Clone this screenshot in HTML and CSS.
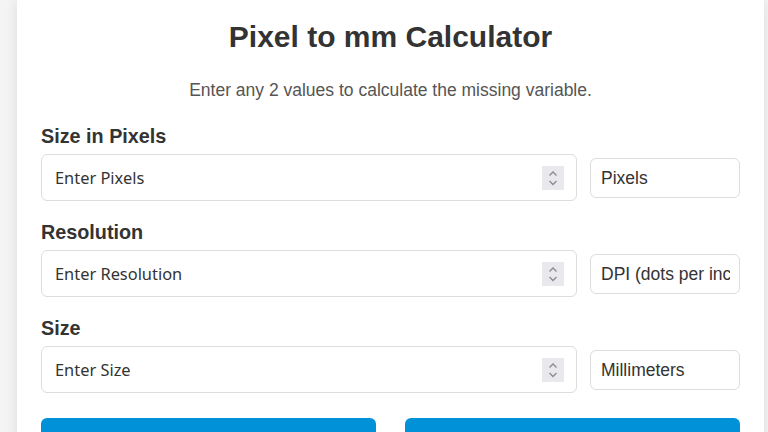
FILE: index.html
```html
<!DOCTYPE html>
<html lang="en">
<head>
<meta charset="utf-8">
<title>Pixel to mm Calculator</title>
<link rel="stylesheet" href="styles.css">
</head>
<body>
<main class="card">
  <h1 class="title">Pixel to mm Calculator</h1>
  <p class="subtitle">Enter any 2 values to calculate the missing variable.</p>

  <div class="group">
    <label class="label" for="px">Size in Pixels</label>
    <div class="row">
      <div class="num">
        <input id="px" class="num-input" type="text" placeholder="Enter Pixels">
        <span class="spin"><svg width="22" height="24" viewBox="0 0 22 24"><path d="M7.5 9.5 L11 6 L14.5 9.5" fill="none" stroke="#8a8a8e" stroke-width="1.3"/><path d="M7.5 15 L11 18.5 L14.5 15" fill="none" stroke="#8a8a8e" stroke-width="1.3"/></svg></span>
      </div>
      <div class="unit"><span class="unit-text">Pixels</span></div>
    </div>
  </div>

  <div class="group">
    <label class="label" for="res">Resolution</label>
    <div class="row">
      <div class="num">
        <input id="res" class="num-input" type="text" placeholder="Enter Resolution">
        <span class="spin"><svg width="22" height="24" viewBox="0 0 22 24"><path d="M7.5 9.5 L11 6 L14.5 9.5" fill="none" stroke="#8a8a8e" stroke-width="1.3"/><path d="M7.5 15 L11 18.5 L14.5 15" fill="none" stroke="#8a8a8e" stroke-width="1.3"/></svg></span>
      </div>
      <div class="unit"><span class="unit-text">DPI (dots per inch)</span></div>
    </div>
  </div>

  <div class="group">
    <label class="label" for="size">Size</label>
    <div class="row">
      <div class="num">
        <input id="size" class="num-input" type="text" placeholder="Enter Size">
        <span class="spin"><svg width="22" height="24" viewBox="0 0 22 24"><path d="M7.5 9.5 L11 6 L14.5 9.5" fill="none" stroke="#8a8a8e" stroke-width="1.3"/><path d="M7.5 15 L11 18.5 L14.5 15" fill="none" stroke="#8a8a8e" stroke-width="1.3"/></svg></span>
      </div>
      <div class="unit"><span class="unit-text">Millimeters</span></div>
    </div>
  </div>

  <div class="actions">
    <button class="btn" type="button">Calculate</button>
    <button class="btn" type="button">Clear</button>
  </div>
</main>
</body>
</html>
```

FILE: styles.css
```css
html, body {
  margin: 0;
  padding: 0;
}
body {
  background: #f4f4f4;
  font-family: "Liberation Sans", Arial, sans-serif;
  color: #333;
  overflow: hidden;
}
.card {
  box-sizing: border-box;
  width: 747px;
  margin-left: 17px;
  background: #fff;
  padding: 21px 24px 24px;
  box-shadow: 0 0 12px rgba(0, 0, 0, 0.1);
  min-height: 500px;
}
.title {
  margin: 0;
  text-align: center;
  font-size: 30px;
  line-height: 32px;
  font-weight: bold;
  color: #333;
}
.subtitle {
  margin: 28px 0 0;
  text-align: center;
  font-size: 17.5px;
  line-height: 18px;
  color: #555;
}
.group {
  margin-top: 27px;
}
.group + .group {
  margin-top: 21px;
}
.label {
  display: block;
  font-size: 19.8px;
  line-height: 21px;
  font-weight: bold;
  color: #333;
  margin-bottom: 7px;
}
.row {
  display: flex;
  align-items: center;
  gap: 13px;
}
.num {
  flex: 1;
  display: flex;
  align-items: center;
  box-sizing: border-box;
  height: 47px;
  border: 1px solid #ddd;
  border-radius: 6px;
  padding: 0 12px 0 13px;
  background: #fff;
}
.num-input {
  flex: 1;
  min-width: 0;
  border: 0;
  outline: none;
  padding: 0;
  background: transparent;
  font-family: "Noto Sans", sans-serif;
  font-size: 16.4px;
  color: #333;
}
.num-input::placeholder {
  color: #333;
  opacity: 1;
}
.spin {
  display: block;
  width: 22px;
  height: 24px;
  background: #e9e9ed;
}
.spin svg {
  display: block;
}
.unit {
  box-sizing: border-box;
  width: 150px;
  height: 40px;
  border: 1px solid #ddd;
  border-radius: 6px;
  padding: 0 9px 0 10px;
  font-size: 17.5px;
  line-height: 38px;
  color: #333;
}
.unit-text {
  display: block;
  white-space: nowrap;
  overflow: hidden;
}
.actions {
  display: grid;
  grid-template-columns: 1fr 1fr;
  gap: 29px;
  margin-top: 25px;
}
.btn {
  height: 56px;
  border: 0;
  border-radius: 6px;
  background: #0091d9;
  color: #fff;
  font-family: "Liberation Sans", Arial, sans-serif;
  font-size: 17.5px;
  padding-top: 8px;
}
```
